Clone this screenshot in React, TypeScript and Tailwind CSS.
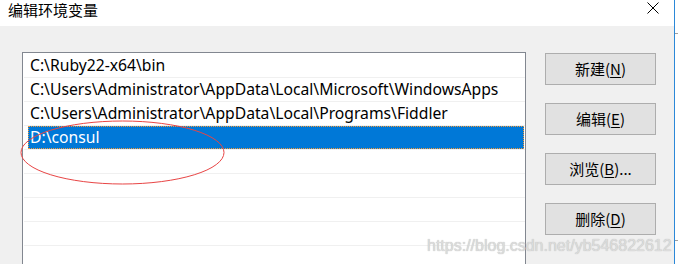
const paths = [
  'C:\\Ruby22-x64\\bin',
  'C:\\Users\\Administrator\\AppData\\Local\\Microsoft\\WindowsApps',
  'C:\\Users\\Administrator\\AppData\\Local\\Programs\\Fiddler',
  'D:\\consul',
];

const ui = { fontFamily: '"Noto Sans", "Noto Sans CJK SC", sans-serif' };
const cjk = { fontFamily: '"Noto Sans CJK SC", "Noto Sans", sans-serif' };

function DialogButton({ label, hotkey, suffix = '' }: { label: string; hotkey: string; suffix?: string }) {
  return (
    <button
      className="w-[111px] h-[32px] shrink-0 bg-[#e1e1e1] border border-[#adadad] text-[15px] text-black flex items-center justify-center"
      style={cjk}
    >
      {label}(<span className="underline underline-offset-2">{hotkey}</span>){suffix}
    </button>
  );
}

export default function App() {
  const rows = [...paths, '', '', '', '', ''];
  const selected = 3;

  return (
    <div className="relative w-[678px] h-[264px] overflow-hidden flex bg-white">
      <div className="w-[674px] h-full flex flex-col overflow-hidden">
        <div className="h-[26px] shrink-0 bg-white flex items-start justify-between pl-[8px] pr-[15px]">
          <span className="text-[15px] leading-[20px] text-black" style={cjk}>
            编辑环境变量
          </span>
          <svg width="12" height="12" viewBox="0 0 12 12" className="mt-[2px]">
            <path d="M0.5 0.5 L11.5 11.5 M11.5 0.5 L0.5 11.5" stroke="#000" strokeWidth="1" />
          </svg>
        </div>

        <div className="flex-1 bg-[#f0f0f0] flex items-start pt-[26px] pl-[22px]">
          <div className="w-[504px] h-[260px] shrink-0 border border-[#828790] bg-white pt-[1px]" style={ui}>
            {rows.map((text, i) => (
              <div key={i} className="h-[24px] ml-[1px] border-b border-[#f0f0f0] flex">
                {i === selected ? (
                  <div className="ml-[4px] mr-[1px] flex-1 h-[23px] bg-[#0078d7] outline-1 outline-dotted outline-[#f29a3b] -outline-offset-1 text-white text-[15.7px] leading-[23px] px-[2px]">
                    {text}
                  </div>
                ) : (
                  <div className="ml-[6px] flex-1 text-black text-[15.7px] leading-[23px] whitespace-nowrap">{text}</div>
                )}
              </div>
            ))}
          </div>

          <div className="ml-[19px] flex flex-col gap-[18px] pt-[1px]">
            <DialogButton label="新建" hotkey="N" />
            <DialogButton label="编辑" hotkey="E" />
            <DialogButton label="浏览" hotkey="B" suffix="..." />
            <DialogButton label="删除" hotkey="D" />
          </div>
        </div>
      </div>

      <div className="w-px h-full shrink-0 bg-[#2b88d8]" />
      <div className="w-[3px] h-full shrink-0 bg-white flex flex-col">
        <div className="h-[33px]" />
        <div className="h-px bg-[#a0a0a0]" />
        <div className="h-[206px]" />
        <div className="h-px bg-[#a0a0a0]" />
      </div>

      <svg className="absolute left-0 top-0 pointer-events-none" width="678" height="264">
        <ellipse cx="122.5" cy="152.5" rx="101.5" ry="31.5" fill="none" stroke="#e84545" strokeWidth="1" />
      </svg>

      <div
        className="absolute left-[427px] top-[237px] text-[16px] leading-[18px] text-[#dcdcdc] pointer-events-none"
        style={{ fontFamily: '"Liberation Sans", Arial, sans-serif', textShadow: '0 0 1px #b0b0b0' }}
      >
        https://blog.csdn.net/yb546822612
      </div>
    </div>
  );
}
